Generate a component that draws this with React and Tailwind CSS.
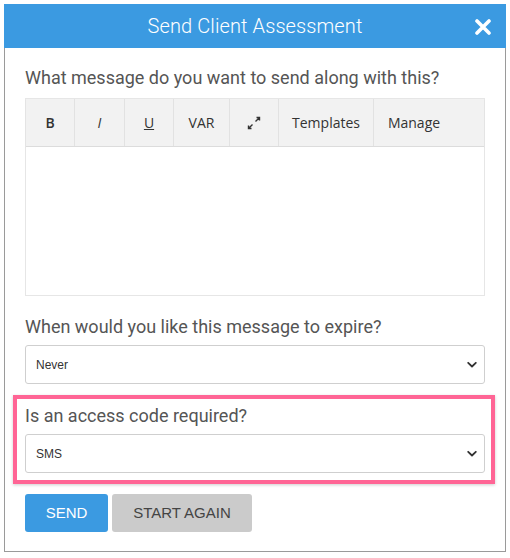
import React from "react";

const Chevron = () => (
  <svg width="10" height="7" viewBox="0 0 10 7" className="absolute right-[7px] top-1/2 -translate-y-1/2">
    <path d="M1.2 1.3 L5 5 L8.8 1.3" fill="none" stroke="#333" strokeWidth="1.8" strokeLinecap="round" strokeLinejoin="round" />
  </svg>
);

const Select = ({ value }) => (
  <div className="relative h-[39px] w-full rounded-[3px] border border-[#cfcfcf] bg-white flex items-center pl-[10px] text-[12px] text-[#333]" style={{ fontFamily: "'Liberation Sans', Arial, sans-serif" }}>
    {value}
    <Chevron />
  </div>
);

const ToolBtn = ({ w, children, last }) => (
  <div className={`h-full flex items-center justify-center ${last ? "" : "border-r border-[#e2e2e2]"} ${w}`}>{children}</div>
);

export default function App() {
  const label = "text-[18px] leading-[24px] text-[#555]";
  return (
    <div className="w-[510px] h-[558px] bg-white pt-[4px] pl-[4px]" style={{ fontFamily: "Roboto, 'Liberation Sans', sans-serif" }}>
      <div className="w-[502px] border border-[#9a9a9a] border-t-0 bg-white">
        <div className="relative h-[44px] bg-[#3b9ae1] flex items-center justify-center text-white text-[20px] -mx-px">
          <span className="font-light tracking-[0.1px]">Send Client Assessment</span>
          <svg width="16" height="16" viewBox="0 0 16 16" className="absolute right-[15px] top-[15px]">
            <path d="M2 2 L14 14 M14 2 L2 14" stroke="white" strokeWidth="3.6" strokeLinecap="round" />
          </svg>
        </div>
        <div className="px-[20px] pt-[18px] pb-[19px]">
          <div className={`${label} mb-[8px]`}>What message do you want to send along with this?</div>
          <div className="border border-[#e6e6e6]">
            <div className="h-[48px] bg-[#f2f2f2] border-b border-[#dcdcdc] flex text-[14px] text-[#333] shadow-[0_1px_1px_rgba(0,0,0,0.06)]" style={{ fontFamily: "'Open Sans', 'DejaVu Sans', sans-serif" }}>
              <ToolBtn w="w-[49px]"><span className="font-semibold">B</span></ToolBtn>
              <ToolBtn w="w-[50px]"><span className="italic">I</span></ToolBtn>
              <ToolBtn w="w-[49px]"><span className="underline">U</span></ToolBtn>
              <ToolBtn w="w-[56px]">VAR</ToolBtn>
              <ToolBtn w="w-[49px]">
                <svg width="14" height="14" viewBox="0 0 14 14">
                  <path d="M8.5 5.5 L12.5 1.5 M9.5 1.5 H12.5 V4.5" fill="none" stroke="#333" strokeWidth="1.4" />
                  <path d="M5.5 8.5 L1.5 12.5 M1.5 9.5 V12.5 H4.5" fill="none" stroke="#333" strokeWidth="1.4" />
                </svg>
              </ToolBtn>
              <ToolBtn w="w-[95px]">Templates</ToolBtn>
              <ToolBtn w="w-[80px]" last>Manage</ToolBtn>
            </div>
            <div className="h-[148px] bg-white"></div>
          </div>
          <div className={`${label} mt-[19px] mb-[6px]`}>When would you like this message to expire?</div>
          <Select value="Never" />
          <div className="mt-[11px] -ml-[12px] -mr-[10px] border-[4px] border-[#ff6595] pl-[8px] pr-[6px] pt-[5px] pb-[7px] shadow-[0_1px_3px_rgba(0,0,0,0.2)]">
            <div className={`${label} mb-[6px]`}>Is an access code required?</div>
            <Select value="SMS" />
          </div>
          <div className="mt-[10px] flex gap-[4px]" style={{ fontFamily: "'Liberation Sans', Arial, sans-serif" }}>
            <div className="h-[38px] w-[83px] rounded-[3px] bg-[#3b9ae1] text-white text-[15px] flex items-center justify-center">SEND</div>
            <div className="h-[38px] w-[140px] rounded-[3px] bg-[#cbcbcb] text-[#444] text-[15px] flex items-center justify-center">START AGAIN</div>
          </div>
        </div>
      </div>
    </div>
  );
}
